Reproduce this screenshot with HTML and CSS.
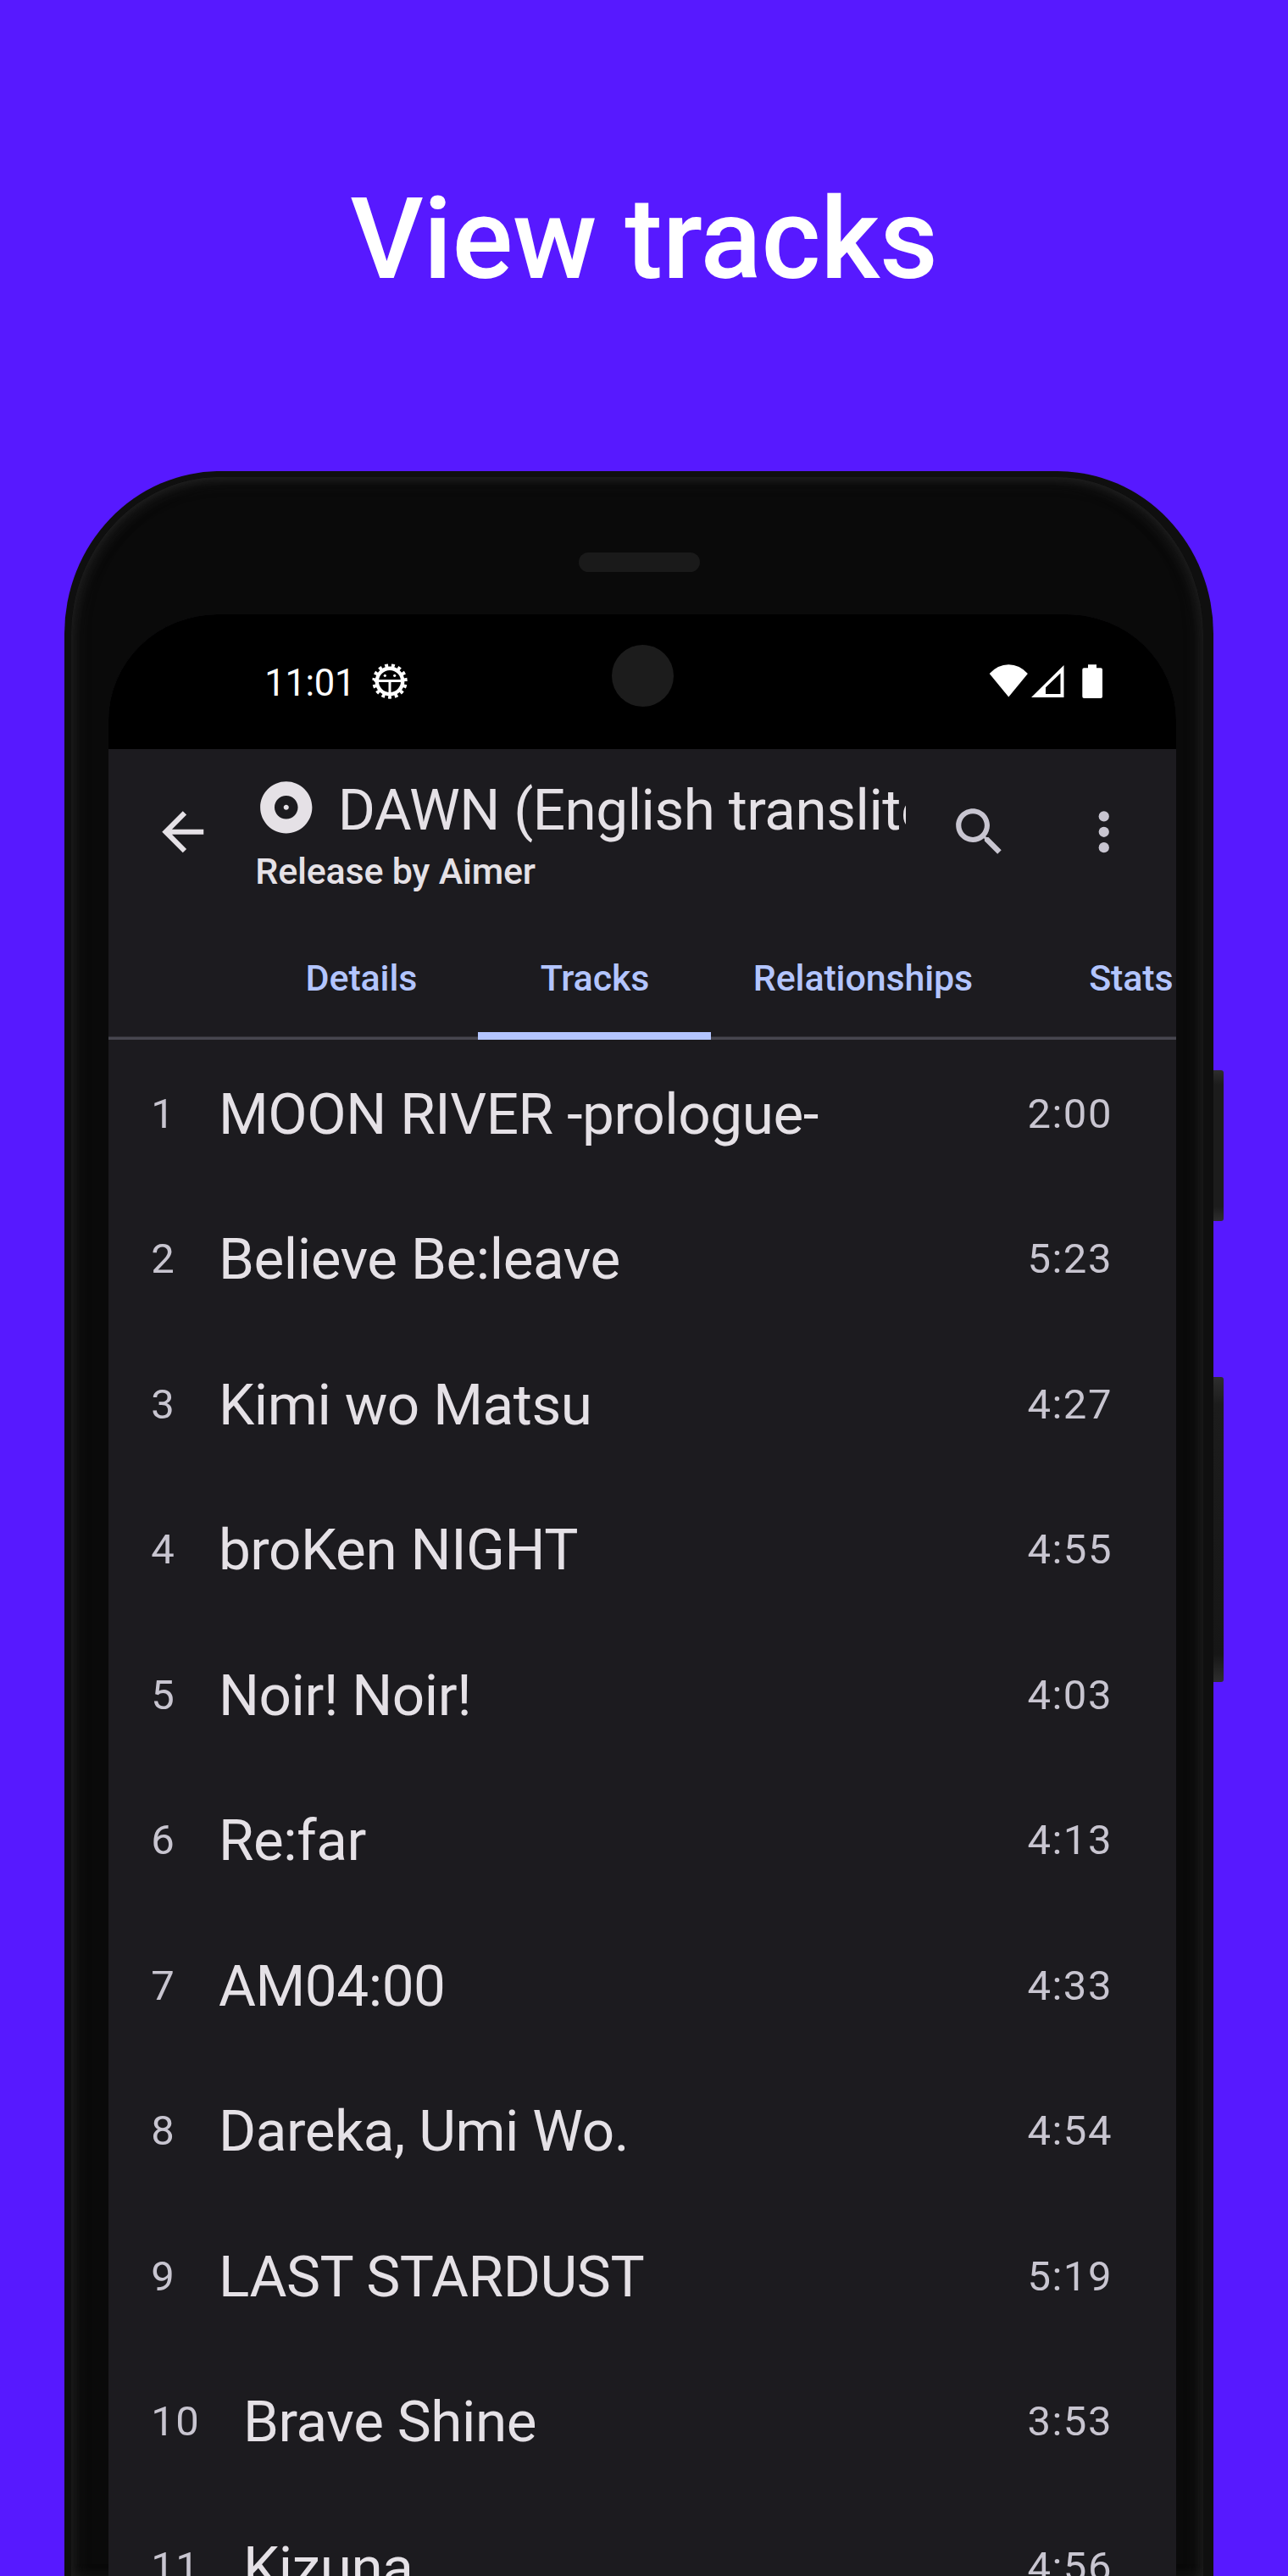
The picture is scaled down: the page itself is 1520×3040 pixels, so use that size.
FILE: index.html
```html
<!DOCTYPE html>
<html lang="en">
<head>
<meta charset="utf-8">
<title>View tracks</title>
<link rel="stylesheet" href="styles.css">
</head>
<body>
<header class="hero"><h1 class="hero-title">View tracks</h1></header>
<main class="phone">
  <span class="side-button power"></span>
  <span class="side-button volume"></span>
  <div class="bezel">
    <div class="speaker"></div>
    <div class="screen">
      <div class="status-bar">
        <span class="clock">11:01</span>
        <svg class="debug-icon" viewBox="-22 -22 44 44">
          <g fill="none" stroke="#fff">
            <circle r="15.2" stroke-width="4.4"/>
            <circle r="18.4" stroke-width="4.6" pathLength="15" stroke-dasharray=".5 .5" stroke-dashoffset=".25" transform="rotate(90)"/>
            <path d="M-14 -.4H14M0 0V15" stroke-width="3"/>
          </g>
          <circle cx="-5.7" cy="-6.7" r="1.6" fill="#fff"/><circle cx="5.7" cy="-6.7" r="1.6" fill="#fff"/>
        </svg>
        <span class="camera"></span>
        <svg class="status-icons" viewBox="0 0 134 40">
          <g fill="#fff">
            <path d="M.7 11Q10.500 .3 23.300 .3T45.900 11L23.300 38.500Z"/>
            <path fill-rule="evenodd" d="M50 39L88.500 1V39ZM67 35H84.500V10.500L67 27.300Z"/>
            <path d="M117 .3H127V4.300H132Q134 4.300 134 6.300V38Q134 40 132 40H112.300Q110.300 40 110.300 38V6.300Q110.300 4.300 112.300 4.300H117Z"/>
          </g>
        </svg>
      </div>
      <div class="app-bar">
        <svg class="icon back" viewBox="0 0 24 24"><path d="M20 11H7.830l5.590-5.590L12 4l-8 8 8 8 1.410-1.410L7.830 13H20v-2z"/></svg>
        <div class="heading">
          <div class="release-title">
            <svg class="icon album" viewBox="0 0 24 24"><path d="M12 2C6.480 2 2 6.480 2 12s4.480 10 10 10 10-4.480 10-10S17.520 2 12 2zm0 14.500c-2.490 0-4.500-2.010-4.500-4.500S9.510 7.500 12 7.500s4.500 2.010 4.500 4.500-2.010 4.500-4.500 4.500zm0-5.500c-.55 0-1 .45-1 1s.45 1 1 1 1-.45 1-1-.45-1-1-1z"/></svg>
            <span>DAWN (English translite</span>
          </div>
          <div class="subtitle">Release by Aimer</div>
        </div>
        <svg class="icon search" viewBox="0 0 24 24"><path d="M15.500 14h-.79l-.28-.27C15.410 12.590 16 11.110 16 9.500 16 5.910 13.090 3 9.500 3S3 5.910 3 9.500 5.910 16 9.500 16c1.610 0 3.090-.59 4.230-1.570l.27.28v.79l5 4.990L20.490 19l-4.990-5zm-6 0C7.010 14 5 11.990 5 9.500S7.010 5 9.500 5 14 7.010 14 9.500 11.990 14 9.500 14z"/></svg>
        <svg class="icon more" viewBox="0 0 24 24"><circle cx="12" cy="6" r="2"/><circle cx="12" cy="12" r="2"/><circle cx="12" cy="18" r="2"/></svg>
      </div>
      <nav class="tabs">
        <span class="tab">Details</span>
        <span class="tab active">Tracks</span>
        <span class="tab">Relationships</span>
        <span class="tab">Stats</span>
      </nav>
      <div class="tracks">
        <div class="track"><span class="number">1</span><span class="name">MOON RIVER -prologue-</span><span class="time">2:00</span></div>
        <div class="track"><span class="number">2</span><span class="name">Believe Be:leave</span><span class="time">5:23</span></div>
        <div class="track"><span class="number">3</span><span class="name">Kimi wo Matsu</span><span class="time">4:27</span></div>
        <div class="track"><span class="number">4</span><span class="name">broKen NIGHT</span><span class="time">4:55</span></div>
        <div class="track"><span class="number">5</span><span class="name">Noir! Noir!</span><span class="time">4:03</span></div>
        <div class="track"><span class="number">6</span><span class="name">Re:far</span><span class="time">4:13</span></div>
        <div class="track"><span class="number">7</span><span class="name">AM04:00</span><span class="time">4:33</span></div>
        <div class="track"><span class="number">8</span><span class="name">Dareka, Umi Wo.</span><span class="time">4:54</span></div>
        <div class="track"><span class="number">9</span><span class="name">LAST STARDUST</span><span class="time">5:19</span></div>
        <div class="track"><span class="number">10</span><span class="name">Brave Shine</span><span class="time">3:53</span></div>
        <div class="track"><span class="number">11</span><span class="name">Kizuna</span><span class="time">4:56</span></div>
      </div>
    </div>
  </div>
</main>
</body>
</html>
```
FILE: styles.css
```css
* { box-sizing: border-box; }
body {
  margin: 0;
  height: 3040px;
  overflow: hidden;
  background: #5719ff;
  font-family: Roboto, "Liberation Sans", sans-serif;
}
svg { display: block; flex: none; }

.hero {
  height: 556px;
  display: flex;
  justify-content: center;
  padding-top: 204px;
}
.hero-title {
  margin: 0;
  color: #fff;
  font-size: 134px;
  font-weight: 500;
  line-height: 157px;
  letter-spacing: -.2px;
  white-space: nowrap;
}

/* Device frame */
.phone {
  position: relative;
  width: 1356px;
  height: 2484px;
  margin-left: 76px;
  padding: 7px 12px 0 8px;
  background: #0f0f0f;
  border-radius: 184px 184px 0 0 / 192px 192px 0 0;
}
.bezel {
  height: 100%;
  padding: 89px 32px 0 44.300px;
  background: #0a0a0a;
  border-radius: 176px 174px 0 0 / 186px 186px 0 0;
  box-shadow: inset 0 10px 20px -10px #272727, inset 10px 0 20px -10px #272727, inset -10px 0 20px -10px #272727;
}
.side-button {
  position: absolute;
  left: 1356px;
  width: 12px;
  border-radius: 0 3px 3px 0;
}
.power {
  top: 707px;
  height: 178px;
  background: linear-gradient(#2e2e2e, #1c1c1c 17px, #1c1c1c 161px, #2e2e2e);
}
.volume {
  top: 1069px;
  height: 360px;
  background: linear-gradient(#2e2e2e, #1c1c1c 33px, #161616 327px, #2e2e2e);
}
.speaker {
  width: 143px;
  height: 23px;
  margin: 0 0 50px 554.700px;
  background: #1a1a1a;
  border-radius: 12px;
}
.screen {
  width: 1259.700px;
  height: 2315px;
  overflow: hidden;
  background: #1c1b1f;
  border-radius: 129px 129px 0 0 / 125px 125px 0 0;
}

/* Status bar */
.status-bar {
  display: flex;
  height: 158.500px;
  padding-left: 184px;
  background: #000;
  color: #fff;
}
.clock {
  width: 120px;
  padding-top: 56px;
  font-size: 43.500px;
  line-height: 52px;
  letter-spacing: -.3px;
}
.debug-icon {
  width: 44px;
  height: 44px;
  margin: 57.300px 0 0 5.400px;
}
.camera {
  width: 73px;
  height: 73px;
  margin: 36px 0 0 240.300px;
  background: #1c1c1c;
  border-radius: 50%;
}
.status-icons {
  width: 134px;
  height: 40px;
  margin: 59px 0 0 372.300px;
}

/* App bar */
.app-bar {
  display: flex;
  align-items: center;
  height: 197px;
  padding-left: 50.500px;
}
.icon {
  width: 73.500px;
  height: 73.500px;
  fill: #e5e1e6;
}
.heading {
  width: 768px;
  height: 100%;
  margin-left: 49px;
  padding-top: 32px;
  overflow: hidden;
  color: #e5e1e6;
  white-space: nowrap;
}
.release-title {
  display: flex;
  height: 79px;
  font-size: 67.400px;
  line-height: 79px;
  letter-spacing: -.48px;
}
.album { margin: 0 24.500px 0 -.5px; }
.subtitle {
  padding-top: 8px;
  font-size: 43px;
  font-weight: 500;
  line-height: 50px;
  letter-spacing: -.22px;
}
.search, .more { fill: #c8c5d0; }
.search { margin-left: 49.800px; }
.more { margin-left: 73.500px; }

/* Tabs */
.tabs {
  display: flex;
  height: 146px;
  padding-left: 159.800px;
  color: #b3c5ff;
  box-shadow: inset 0 -3.500px #47464f;
}
.tab {
  flex: none;
  min-width: 275.600px;
  padding: 48px 48.500px 0 49.500px;
  font-size: 43px;
  font-weight: 500;
  line-height: 50px;
  letter-spacing: -.15px;
  text-align: center;
}
.active { box-shadow: inset 0 -9px #b3c5ff; }

/* Track list */
.track {
  display: flex;
  align-items: center;
  height: 171.500px;
  padding: 4px 75px 0 50px;
  white-space: nowrap;
}
.number, .time {
  color: #c8c5d0;
  font-size: 49px;
  letter-spacing: 1.530px;
}
.name {
  flex: 1;
  margin-left: 50.500px;
  color: #e5e1e6;
  font-size: 67.400px;
  letter-spacing: -.42px;
}
```
